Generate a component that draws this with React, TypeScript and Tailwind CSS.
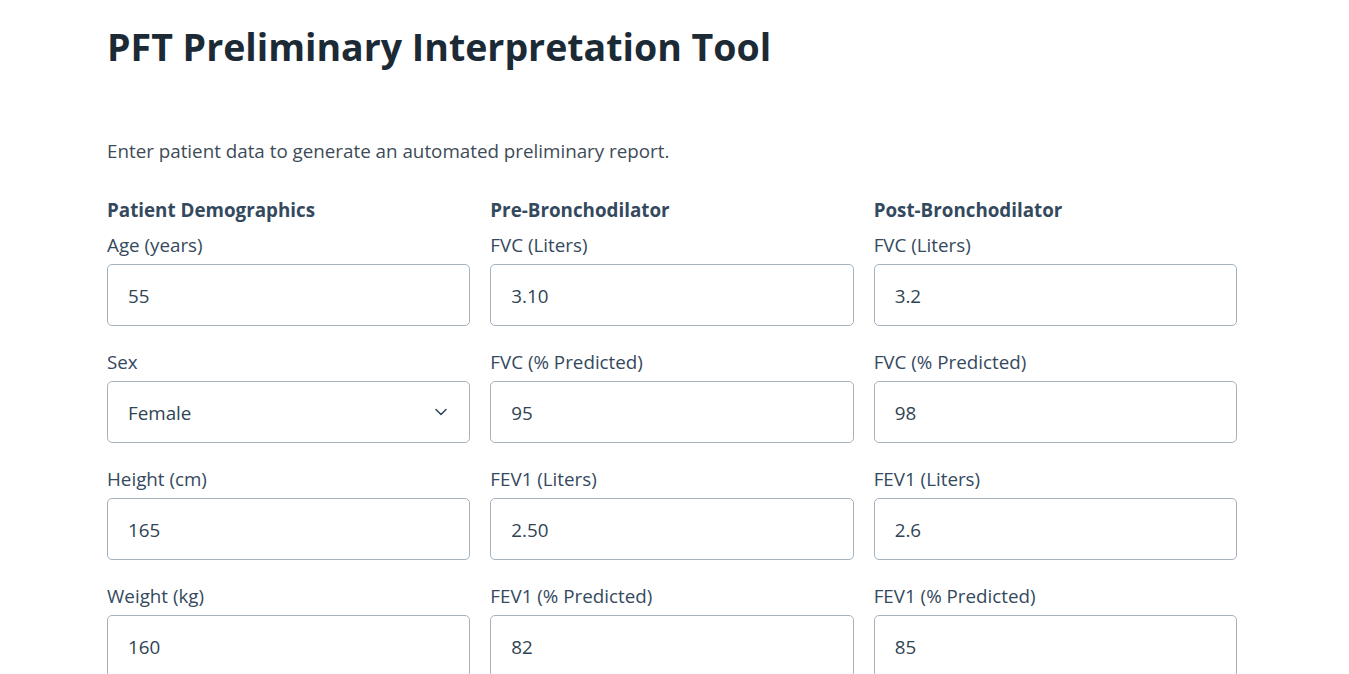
import React from 'react';

type Field = { label: string; value: string; select?: boolean };

const columns: { title: string; fields: Field[] }[] = [
  {
    title: 'Patient Demographics',
    fields: [
      { label: 'Age (years)', value: '55' },
      { label: 'Sex', value: 'Female', select: true },
      { label: 'Height (cm)', value: '165' },
      { label: 'Weight (kg)', value: '160' },
    ],
  },
  {
    title: 'Pre-Bronchodilator',
    fields: [
      { label: 'FVC (Liters)', value: '3.10' },
      { label: 'FVC (% Predicted)', value: '95' },
      { label: 'FEV1 (Liters)', value: '2.50' },
      { label: 'FEV1 (% Predicted)', value: '82' },
    ],
  },
  {
    title: 'Post-Bronchodilator',
    fields: [
      { label: 'FVC (Liters)', value: '3.2' },
      { label: 'FVC (% Predicted)', value: '98' },
      { label: 'FEV1 (Liters)', value: '2.6' },
      { label: 'FEV1 (% Predicted)', value: '85' },
    ],
  },
];

function FieldInput({ field }: { field: Field }) {
  return (
    <div className="mb-6">
      <label className="block text-[18.8px] leading-6 text-[#34495e]">{field.label}</label>
      <div className="mt-[7px] flex h-[62px] items-center justify-between rounded-[5px] border border-[#a5b3bf] bg-white pl-5 pr-[22px] pt-[3px] text-[18.8px] text-[#2f4454]">
        <span>{field.value}</span>
        {field.select && (
          <svg width="12" height="8" viewBox="0 0 12 8" fill="none" className="-mt-[3px]">
            <path d="M1 1.5l5 5 5-5" stroke="#34495e" strokeWidth="1.6" strokeLinecap="round" strokeLinejoin="round" />
          </svg>
        )}
      </div>
    </div>
  );
}

export default function App() {
  return (
    <div className="min-h-screen bg-white font-['Open_Sans',sans-serif]">
      <div className="ml-[107px] w-[1130px] pt-6">
        <h1 className="text-[37.5px] font-bold leading-[46px] text-[#1b2a35]">
          PFT Preliminary Interpretation Tool
        </h1>
        <p className="mt-[69px] text-[18.8px] leading-6 text-[#3d4b57]">
          Enter patient data to generate an automated preliminary report.
        </p>
        <div className="mt-[35px] grid grid-cols-3 gap-x-5">
          {columns.map((col) => (
            <div key={col.title}>
              <h2 className="mb-[11px] text-[18.8px] font-bold leading-6 text-[#34495e]">{col.title}</h2>
              {col.fields.map((f) => (
                <FieldInput key={f.label} field={f} />
              ))}
            </div>
          ))}
        </div>
      </div>
    </div>
  );
}
